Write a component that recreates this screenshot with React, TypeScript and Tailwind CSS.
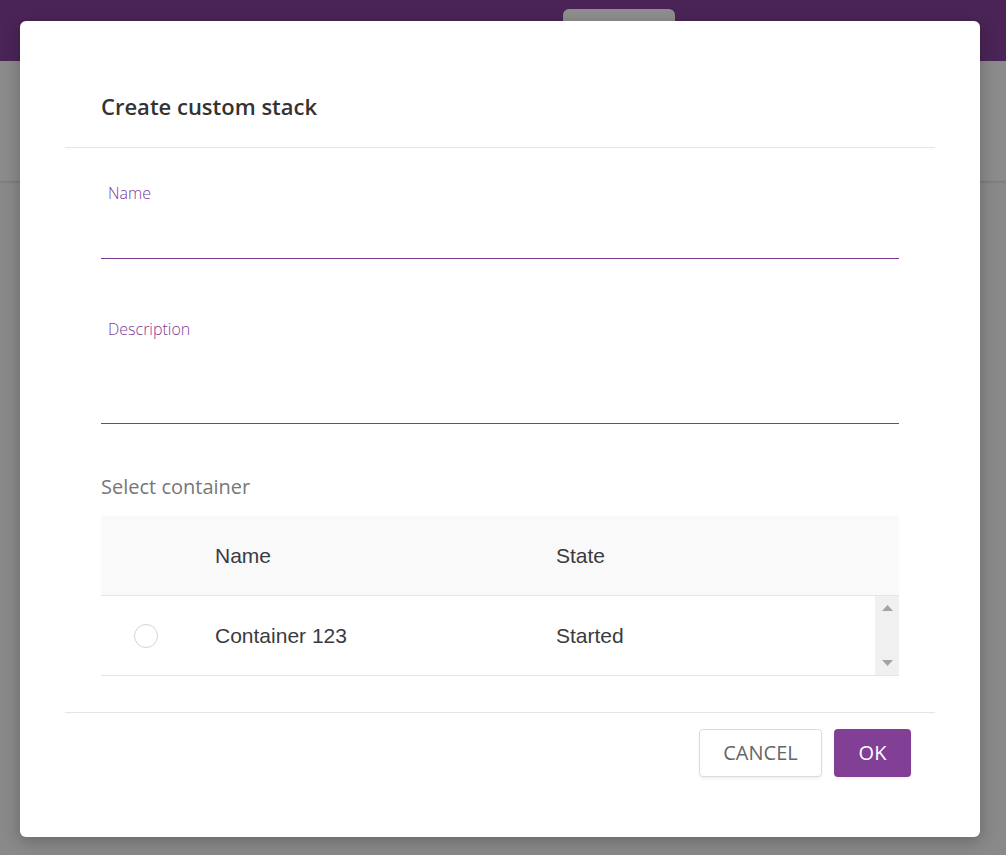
import React from 'react';

const ui = { fontFamily: '"Open Sans", "Noto Sans", sans-serif' };
const arial = { fontFamily: '"Liberation Sans", Arial, sans-serif' };

function Field({ label, height }: { label: string; height: string }) {
  return (
    <div className={`flex flex-col border-b border-[#7d3c98] ${height}`}>
      <label className="pl-[7px] text-[16px] leading-[20px] font-light text-[#7d3c98]" style={ui}>
        {label}
      </label>
    </div>
  );
}

export default function App() {
  return (
    <div className="relative h-[855px] w-[1006px] overflow-hidden bg-[#898989]">
      {/* page behind the overlay */}
      <div className="relative h-[61px] bg-[#4a2456]">
        <div className="absolute left-[563px] top-[9px] h-[30px] w-[112px] rounded-t-[6px] bg-[#8e8e8e]" />
      </div>
      <div className="h-[120px] bg-[#8b8b8b] shadow-[0_1px_2px_rgba(0,0,0,0.15)]" />

      {/* modal */}
      <div className="absolute left-[20px] top-[21px] flex h-[816px] w-[960px] flex-col rounded-[6px] bg-white shadow-[0_4px_16px_rgba(0,0,0,0.25)]">
        <div className="mx-[45px] flex h-[127px] items-center border-b border-[#e5e5e5] px-[36px] pt-[65px] pb-[20px]">
          <h2 className="text-[22px] font-semibold text-[#333]" style={ui}>
            Create custom stack
          </h2>
        </div>

        <div className="flex flex-col px-[81px] pt-[35px]">
          <Field label="Name" height="h-[76px]" />
          <div className="h-[60px]" />
          <Field label="Description" height="h-[105px]" />

          <div className="pt-[48px] pb-[14px] text-[20px] text-[#777]" style={ui}>
            Select container
          </div>

          <div style={arial} className="text-[21px] text-[#3a3a42]">
            <div className="flex h-[80px] items-center border-b border-[#e5e5e5] bg-[#f9f9f9]">
              <div className="w-[114px]" />
              <div className="w-[341px]">Name</div>
              <div>State</div>
            </div>
            <div className="flex h-[80px] items-center border-b border-[#e5e5e5]">
              <div className="flex w-[114px] pl-[33px]">
                <span className="h-[24px] w-[24px] rounded-full border border-[#d4d4d4]" />
              </div>
              <div className="w-[341px]">Container 123</div>
              <div className="flex-1">Started</div>
              <div className="flex h-full w-[24px] flex-col items-center justify-between bg-[#f0f0f0] py-[9px]">
                <svg width="11" height="6" viewBox="0 0 11 6"><path d="M5.5 0L11 6H0z" fill="#a3a3a3" /></svg>
                <svg width="11" height="6" viewBox="0 0 11 6"><path d="M0 0h11L5.5 6z" fill="#a3a3a3" /></svg>
              </div>
            </div>
          </div>
        </div>

        <div className="mx-[45px] mt-[36px] flex justify-end gap-[12px] border-t border-[#e5e5e5] pt-[16px] pr-[24px]" style={ui}>
          <button className="h-[48px] w-[123px] rounded-[4px] border border-[#dcdcdc] bg-white text-[20px] text-[#666] shadow-[0_2px_3px_rgba(0,0,0,0.05)]">
            CANCEL
          </button>
          <button className="h-[48px] w-[77px] rounded-[4px] bg-[#823f96] text-[20px] text-white shadow-[0_2px_3px_rgba(0,0,0,0.05)]">
            OK
          </button>
        </div>
      </div>
    </div>
  );
}
